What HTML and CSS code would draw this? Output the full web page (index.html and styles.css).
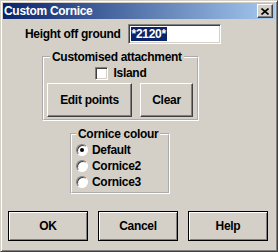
FILE: index.html
```html
<!DOCTYPE html>
<html lang="en">
  <head>
    <meta charset="UTF-8" />
    <title>Custom Cornice</title>
    <link rel="stylesheet" href="styles.css">
  </head>
  <body>
    <div class="window">
      <div class="titlebar">
        <span class="title">Custom Cornice</span>
        <span class="close-btn">
          <svg width="8" height="7" viewBox="0 0 8 7">
            <path d="M0.5 0.5L7.5 6.5M7.5 0.5L0.5 6.5" stroke="#000" stroke-width="1.6" />
          </svg>
        </span>
      </div>
      <div class="content">
        <div class="height-row">
          <label class="height-label">Height off ground</label>
          <div class="text-input"><span class="selected">*2120*</span></div>
        </div>

        <fieldset class="group group-attach">
          <legend>Customised attachment</legend>
          <div class="check-row">
            <span class="checkbox"></span>
            <span>Island</span>
          </div>
          <div class="group-buttons">
            <button class="btn btn-edit">Edit points</button>
            <button class="btn btn-clear">Clear</button>
          </div>
        </fieldset>

        <fieldset class="group group-colour">
          <legend>Cornice colour</legend>
          <div class="radio-row"><span class="radio checked"></span><span>Default</span></div>
          <div class="radio-row"><span class="radio"></span><span>Cornice2</span></div>
          <div class="radio-row"><span class="radio"></span><span>Cornice3</span></div>
        </fieldset>

        <div class="dialog-buttons">
          <button class="btn btn-default">OK</button>
          <button class="btn btn-default">Cancel</button>
          <button class="btn btn-default">Help</button>
        </div>
      </div>
    </div>
  </body>
</html>
```

FILE: styles.css
```css
body {
  margin: 0;
  font-family: "Liberation Sans", Arial, sans-serif;
  font-size: 12px;
  font-weight: bold;
  letter-spacing: -0.3px;
  color: #000;
}

.window {
  width: 278px;
  height: 252px;
  box-sizing: border-box;
  background: #d4d0c8;
  border: 1px solid;
  border-color: #d4d0c8 #404040 #404040 #d4d0c8;
  box-shadow: inset 1px 1px 0 #fff, inset -1px -1px 0 #808080;
  padding: 2px;
}

.titlebar {
  height: 16px;
  display: flex;
  align-items: center;
  justify-content: space-between;
  background: linear-gradient(to right, #0a246a, #a6caf0);
  color: #fff;
  padding: 0 2px 0 1px;
}

.title {
  line-height: 16px;
}

.close-btn {
  width: 16px;
  height: 14px;
  box-sizing: border-box;
  display: flex;
  align-items: center;
  justify-content: center;
  background: #d4d0c8;
  border: 1px solid;
  border-color: #fff #404040 #404040 #fff;
  box-shadow: inset -1px -1px 0 #808080;
}

.content {
  display: flex;
  flex-direction: column;
  align-items: flex-start;
}

.height-row {
  display: flex;
  align-items: center;
  gap: 7px;
  margin: 5px 0 0 22px;
}

.text-input {
  width: 93px;
  height: 20px;
  box-sizing: border-box;
  background: #fff;
  border: 1px solid;
  border-color: #808080 #fff #fff #808080;
  box-shadow: inset 1px 1px 0 #404040, inset -1px -1px 0 #d4d0c8;
  padding: 2px 0 0 2px;
  line-height: 14px;
}

.selected {
  background: #0a246a;
  color: #fff;
  display: inline-block;
  padding: 0 1px;
}

.group {
  margin: 6px 0 0;
  padding: 0;
  border: 2px groove #fff;
  box-sizing: border-box;
  min-width: 0;
}

.group legend {
  padding: 0 2px;
  line-height: 14px;
}

.group-attach {
  margin-left: 39px;
  width: 157px;
  padding: 2px 3px 2px 3px;
}

.group-attach legend {
  margin-left: 3px;
}

.check-row {
  display: flex;
  align-items: center;
  justify-content: center;
  gap: 6px;
  height: 14px;
}

.checkbox {
  width: 13px;
  height: 13px;
  box-sizing: border-box;
  background: #fff;
  border: 1px solid;
  border-color: #808080 #fff #fff #808080;
  box-shadow: inset 1px 1px 0 #404040, inset -1px -1px 0 #d4d0c8;
}

.group-buttons {
  display: flex;
  gap: 8px;
  margin-top: 3px;
}

.btn {
  font: inherit;
  letter-spacing: inherit;
  color: #000;
  background: #d4d0c8;
  border: 1px solid;
  border-color: #fff #404040 #404040 #fff;
  box-shadow: inset -1px -1px 0 #808080;
  padding: 0;
  box-sizing: border-box;
}

.btn-edit {
  width: 85px;
  height: 34px;
}

.btn-clear {
  width: 53px;
  height: 34px;
}

.group-colour {
  margin: 6px 0 0 67px;
  width: 100px;
  padding: 1px 2px 2px 4px;
}

.radio-row {
  display: flex;
  align-items: center;
  gap: 4px;
  height: 16px;
}

.radio {
  width: 12px;
  height: 12px;
  box-sizing: border-box;
  border-radius: 50%;
  background: #fff;
  border: 1px solid;
  border-color: #808080 #fff #fff #808080;
  box-shadow: inset 1px 1px 0 #404040;
  display: flex;
  align-items: center;
  justify-content: center;
}

.radio.checked::after {
  content: "";
  width: 4px;
  height: 4px;
  border-radius: 50%;
  background: #000;
}

.dialog-buttons {
  display: flex;
  gap: 10px;
  margin: 17px 0 0 5px;
}

.btn-default {
  width: 80px;
  height: 30px;
  border: 1px solid #000;
  box-shadow: inset 1px 1px 0 #fff, inset -1px -1px 0 #808080;
}
```
